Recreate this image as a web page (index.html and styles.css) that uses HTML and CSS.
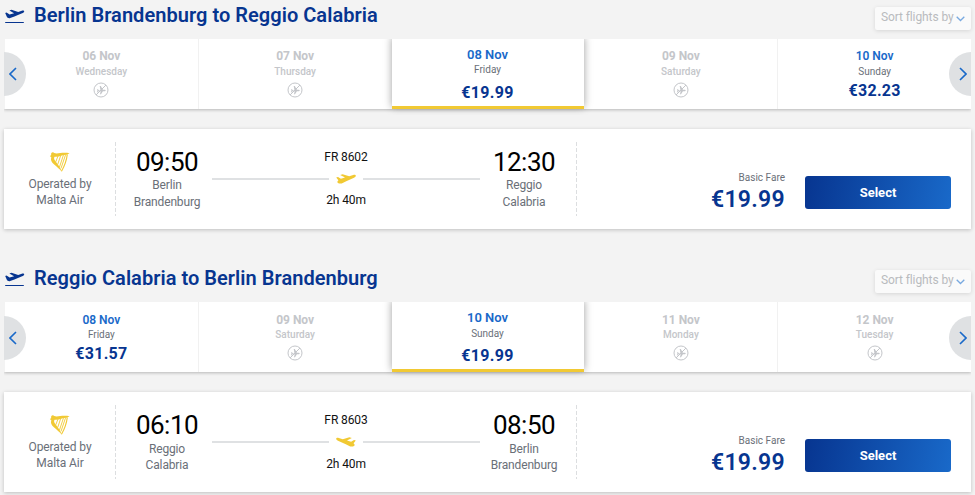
FILE: index.html
```html
<!DOCTYPE html>
<html lang="en">
<head>
    <meta charset="UTF-8">
    <meta name="viewport" content="width=device-width, initial-scale=1.0">
    <title>Select flights</title>
    <link rel="stylesheet" href="styles.css">
</head>
<body>
    <!-- Shared icons -->
    <svg class="icon-defs" width="0" height="0">
        <symbol id="plane" viewBox="0 0 20 10">
            <path d="M.2 3.6 2 3.1 4.9 4.8 9 3.6 4.2.9 6.6.2 13.2 2.2 17.2 1C18.7.6 19.8.9 19.8 1.8 19.8 2.7 18.8 3.4 17.5 4L10.2 7.2C8.2 8.2 6.3 9.6 4.2 9.6 2.4 9.6 1.3 8.8 1.3 7.7L2.4 6.3Z"/>
        </symbol>
        <symbol id="takeoff" viewBox="0 0 20 16">
            <path d="M.2 4 1.5 3.6 4.6 5.5 9.1 4.2 4.4 1.4 6.5.7 13.2 2.9 16.8 1.8C18.2 1.4 19.2 1.7 19.2 2.5 19.2 3.4 18.2 3.9 17.1 4.3L9.4 7.4 5.2 9C3.6 9.6 2.3 8.6 1.7 7.5Z"/>
            <path d="M.2 13h18.6v1H.2z"/>
        </symbol>
        <symbol id="no-flight" viewBox="0 0 16 16">
            <circle cx="8" cy="8" r="7" fill="none" stroke="currentColor"/>
            <path d="M3 13 13 3" stroke="currentColor"/>
            <path d="M4 7.3h1l1 1.1h1.5L6.7 4h1.1l2.1 3.7h1.9c1.2 0 1.2 1.5 0 1.5H9.9L8 12.3H7l.7-3H5.5L4.4 10.5H3.8l.7-1.7z"/>
        </symbol>
        <symbol id="harp" viewBox="0 0 22 22">
            <path d="M2.2 2.2C3 1 4.7 1.1 5.2 2.1 9 3.2 13 .9 20.6 2.2L17.6 3.8C13.4 3.8 9.6 6.3 5.6 5.7 4.6 6.8 5.1 8.3 6.5 10.2 8.7 13.4 11.4 16 12.8 20.8 10.8 18 7.6 15.8 4.9 13.3 2.6 11.1 1.3 8.8 2.3 6.2L.8 4.9 2.1 4.2Z"/>
            <path d="M18.3 3.4C17.6 9.3 15.4 15.2 12.5 20.3" fill="none" stroke="currentColor" stroke-width="1.1"/>
            <path d="M9 5 6.8 10.8M11.8 4.2 8.7 13.5M14.5 3.8 10.5 16M16.6 3.7 12 17.3" fill="none" stroke="currentColor" stroke-width=".9"/>
        </symbol>
        <symbol id="chevron" viewBox="0 0 8 14">
            <path d="M1 1 7 7 1 13" fill="none" stroke="currentColor" stroke-width="1.6"/>
        </symbol>
        <symbol id="chevron-down" viewBox="0 0 9 6">
            <path d="M.7.7 4.5 4.5 8.3.7" fill="none" stroke="currentColor" stroke-width="1.3"/>
        </symbol>
    </svg>

    <main class="flights">
        <section class="journey">
            <header class="journey-header">
                <svg class="takeoff-icon"><use href="#takeoff"/></svg>
                <h2>Berlin Brandenburg to Reggio Calabria</h2>
                <button class="sort">Sort flights by <svg><use href="#chevron-down"/></svg></button>
            </header>

            <div class="carousel">
                <button class="arrow prev"><svg><use href="#chevron"/></svg></button>
                <div class="day disabled">
                    <span class="date">06 Nov</span>
                    <span class="weekday">Wednesday</span>
                    <svg class="no-flight"><use href="#no-flight"/></svg>
                </div>
                <div class="day disabled">
                    <span class="date">07 Nov</span>
                    <span class="weekday">Thursday</span>
                    <svg class="no-flight"><use href="#no-flight"/></svg>
                </div>
                <div class="day selected">
                    <span class="date">08 Nov</span>
                    <span class="weekday">Friday</span>
                    <span class="price">€19.99</span>
                </div>
                <div class="day disabled">
                    <span class="date">09 Nov</span>
                    <span class="weekday">Saturday</span>
                    <svg class="no-flight"><use href="#no-flight"/></svg>
                </div>
                <div class="day">
                    <span class="date">10 Nov</span>
                    <span class="weekday">Sunday</span>
                    <span class="price">€32.23</span>
                </div>
                <button class="arrow next"><svg><use href="#chevron"/></svg></button>
            </div>

            <article class="card">
                <div class="operator">
                    <svg><use href="#harp"/></svg>
                    <span>Operated by<br>Malta Air</span>
                </div>
                <div class="schedule">
                    <div class="stop">
                        <span class="time">09:50</span>
                        <span class="city">Berlin<br>Brandenburg</span>
                    </div>
                    <div class="route">
                        <span class="number">FR 8602</span>
                        <div class="line"><svg><use href="#plane"/></svg></div>
                        <span class="duration">2h 40m</span>
                    </div>
                    <div class="stop">
                        <span class="time">12:30</span>
                        <span class="city">Reggio<br>Calabria</span>
                    </div>
                </div>
                <div class="fare">
                    <div class="fare-price">
                        <span class="fare-label">Basic Fare</span>
                        <span class="amount">€19.99</span>
                    </div>
                    <button class="select">Select</button>
                </div>
            </article>
        </section>

        <section class="journey return">
            <header class="journey-header">
                <svg class="takeoff-icon"><use href="#takeoff"/></svg>
                <h2>Reggio Calabria to Berlin Brandenburg</h2>
                <button class="sort">Sort flights by <svg><use href="#chevron-down"/></svg></button>
            </header>

            <div class="carousel">
                <button class="arrow prev"><svg><use href="#chevron"/></svg></button>
                <div class="day">
                    <span class="date">08 Nov</span>
                    <span class="weekday">Friday</span>
                    <span class="price">€31.57</span>
                </div>
                <div class="day disabled">
                    <span class="date">09 Nov</span>
                    <span class="weekday">Saturday</span>
                    <svg class="no-flight"><use href="#no-flight"/></svg>
                </div>
                <div class="day selected">
                    <span class="date">10 Nov</span>
                    <span class="weekday">Sunday</span>
                    <span class="price">€19.99</span>
                </div>
                <div class="day disabled">
                    <span class="date">11 Nov</span>
                    <span class="weekday">Monday</span>
                    <svg class="no-flight"><use href="#no-flight"/></svg>
                </div>
                <div class="day disabled">
                    <span class="date">12 Nov</span>
                    <span class="weekday">Tuesday</span>
                    <svg class="no-flight"><use href="#no-flight"/></svg>
                </div>
                <button class="arrow next"><svg><use href="#chevron"/></svg></button>
            </div>

            <article class="card">
                <div class="operator">
                    <svg><use href="#harp"/></svg>
                    <span>Operated by<br>Malta Air</span>
                </div>
                <div class="schedule">
                    <div class="stop">
                        <span class="time">06:10</span>
                        <span class="city">Reggio<br>Calabria</span>
                    </div>
                    <div class="route">
                        <span class="number">FR 8603</span>
                        <div class="line inbound"><svg><use href="#plane"/></svg></div>
                        <span class="duration">2h 40m</span>
                    </div>
                    <div class="stop">
                        <span class="time">08:50</span>
                        <span class="city">Berlin<br>Brandenburg</span>
                    </div>
                </div>
                <div class="fare">
                    <div class="fare-price">
                        <span class="fare-label">Basic Fare</span>
                        <span class="amount">€19.99</span>
                    </div>
                    <button class="select">Select</button>
                </div>
            </article>
        </section>
    </main>
</body>
</html>
```

FILE: styles.css
```css
* {
    box-sizing: border-box;
}

body {
    margin: 0;
    background-color: #f3f3f3;
    font-family: Roboto, "Liberation Sans", sans-serif;
}

svg {
    display: block;
    fill: currentColor;
}

.icon-defs {
    position: absolute;
}

button {
    border: 0;
    padding: 0;
    font-family: inherit;
}

.flights {
    padding: 0 4px;
}

.journey {
    height: 263px;
}

.journey-header {
    display: flex;
    height: 39px;
    align-items: flex-start;
    color: #073590;
}

.takeoff-icon {
    width: 20px;
    height: 16px;
    margin: 9px 9px 0 1px;
}

h2 {
    margin: 0;
    font-size: 20px;
    font-weight: 600;
    line-height: 30px;
    letter-spacing: 0.04px;
}

.sort {
    display: flex;
    align-items: center;
    width: 96px;
    height: 23px;
    margin: 7px 0 0 auto;
    padding: 0 0 3px 6px;
    background-color: #fafafa;
    border-radius: 2px;
    box-shadow: 0 1px 4px rgba(0, 0, 0, 0.12);
    font-size: 12px;
    letter-spacing: -0.1px;
    color: #b9bbbe;
    white-space: nowrap;
}

.sort svg {
    width: 9px;
    height: 6px;
    margin: 3px 0 0 2px;
    color: #78a9e0;
}

/* Date carousel */
.carousel {
    position: relative;
    display: flex;
    height: 70px;
    padding-left: 1px;
    background: linear-gradient(#fff, #fff) 1px 0 no-repeat;
    box-shadow: 0 1px 3px rgba(0, 0, 0, 0.25);
    clip-path: inset(0 0 -6px 0);
}

.day {
    display: flex;
    flex: 1;
    flex-direction: column;
    align-items: center;
    padding-top: 9px;
    border-right: 1px solid #f1f1f1;
    color: #073590;
}

.day:nth-child(6) {
    border-right: 0;
}

.date {
    font-size: 12px;
    font-weight: 600;
    line-height: 16px;
    color: #1969c9;
}

.weekday {
    font-size: 10px;
    line-height: 16px;
    color: #6a6f78;
}

.price {
    margin-top: 1px;
    font-size: 16px;
    font-weight: 700;
    line-height: 20px;
    letter-spacing: 0.3px;
}

.disabled,
.disabled .date,
.disabled .weekday {
    color: #c4c6ca;
}

.disabled .date {
    font-weight: 700;
}

.disabled .weekday {
    font-weight: 500;
}

.no-flight {
    width: 16px;
    height: 16px;
    margin-top: 2px;
}

.selected {
    z-index: 1;
    flex: 0 0 192px;
    margin: 0 1px 0 -1px;
    padding-top: 8px;
    background-color: #fff;
    border-right: 0;
    border-bottom: 3px solid #f1c933;
    box-shadow: 0 -2px 8px rgba(0, 0, 0, 0.38);
}

.selected .date {
    font-size: 13px;
}

.selected .weekday {
    line-height: 14px;
}

.selected .price {
    margin-top: 6px;
}

.return .day:not(.selected) {
    padding-top: 10px;
}

.return .day:not(.selected) .weekday {
    margin-top: -1px;
}

.return .selected .weekday {
    padding-top: 1px;
    margin-bottom: -1px;
}

/* Arrows lie over the first and last day */
.arrow {
    position: absolute;
    top: 13px;
    z-index: 2;
    display: flex;
    align-items: center;
    width: 22px;
    height: 44px;
    background-color: #dfe1e3;
    color: #1969c9;
}

.return .arrow {
    top: 14px;
}

.arrow svg {
    width: 8px;
    height: 14px;
}

.prev {
    left: 0;
    padding-left: 5px;
    border-radius: 0 22px 22px 0;
}

.prev svg {
    transform: scaleX(-1);
}

.next {
    right: 0;
    padding-left: 10px;
    border-radius: 22px 0 0 22px;
}

/* Flight card */
.card {
    display: flex;
    height: 100px;
    margin-top: 20px;
    padding: 13px 20px 13px 0;
    background-color: #fff;
    box-shadow: 0 1px 4px rgba(0, 0, 0, 0.22);
}

.return {
    height: 232px;
}

.operator {
    display: flex;
    flex-direction: column;
    align-items: center;
    width: 112px;
    padding-top: 9px;
    font-size: 12px;
    line-height: 16px;
    letter-spacing: -0.1px;
    text-align: center;
    color: #6a6f78;
}

.operator svg {
    width: 22px;
    height: 22px;
    margin-bottom: 3px;
    color: #f1c933;
}

.operator,
.schedule {
    background: repeating-linear-gradient(#dcdee0 0 4px, transparent 4px 6px) right / 1px 100% no-repeat;
}

.schedule {
    display: flex;
    width: 461px;
}

.stop {
    display: flex;
    flex-direction: column;
    align-items: center;
    width: 88px;
    margin-left: 7px;
    padding-top: 5px;
}

.route + .stop {
    margin-left: 0;
}

.time {
    font-size: 26px;
    line-height: 30px;
    letter-spacing: -0.5px;
    color: #000;
}

.city {
    font-size: 12px;
    line-height: 17px;
    letter-spacing: -0.15px;
    text-align: center;
    color: #6a6f78;
}

.return .city {
    padding-top: 1px;
    line-height: 16px;
}

.route {
    display: flex;
    flex-direction: column;
    width: 268px;
    margin-left: 1px;
    padding-top: 7px;
    font-size: 12px;
    line-height: 16px;
    letter-spacing: -0.1px;
    text-align: center;
    color: #111;
}

.line {
    display: flex;
    align-items: center;
    gap: 7px;
    height: 28px;
    margin-bottom: -1px;
    color: #f1c933;
}

.return .line {
    margin-bottom: 0;
}

.line::before,
.line::after {
    content: "";
    flex: 1;
    height: 2px;
    background-color: #dfe1e3;
}

.line svg {
    width: 20px;
    height: 10px;
}

.inbound svg {
    transform: scaleX(-1);
}

.fare {
    display: flex;
    flex: 1;
    justify-content: flex-end;
    padding-top: 29px;
}

.fare-price {
    display: flex;
    flex-direction: column;
    align-items: flex-end;
    margin: 0 20px 0 0;
}

.fare-label {
    font-size: 10px;
    line-height: 13px;
    color: #6a6f78;
}

.amount {
    font-size: 23px;
    font-weight: 600;
    line-height: 32px;
    letter-spacing: 0.3px;
    color: #073590;
}

.select {
    width: 146px;
    height: 33px;
    margin-top: 5px;
    border-radius: 3px;
    background: linear-gradient(100deg, #073590, #1969c9);
    font-size: 13px;
    font-weight: 700;
    color: #fff;
}
```
